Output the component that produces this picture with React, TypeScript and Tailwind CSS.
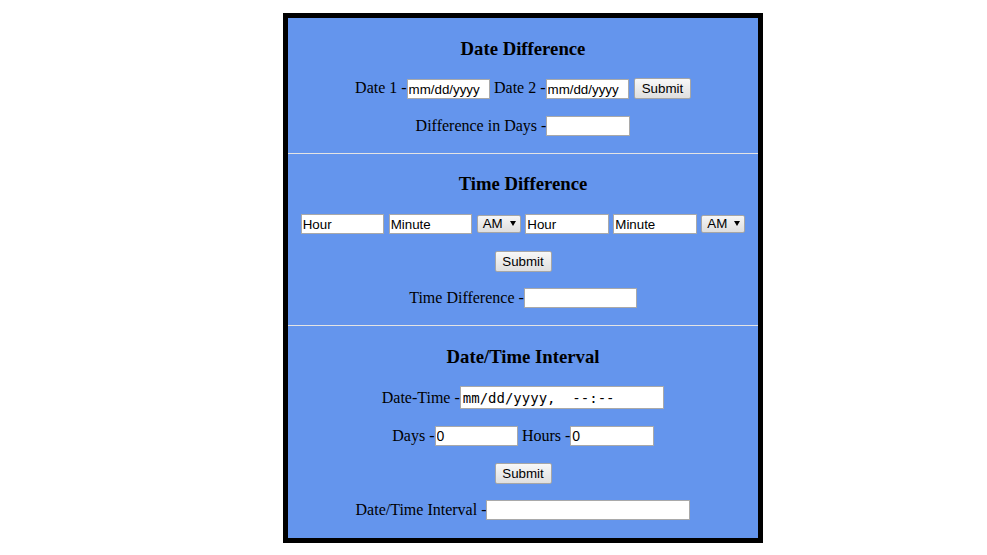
import type { ReactNode } from 'react'

const field =
  "h-[20px] border border-[#a9a9a9] bg-white px-[1px] font-['Liberation_Sans',Arial,sans-serif] text-[13.33px] text-black outline-none"
const mono = "font-['DejaVu_Sans_Mono',monospace]"
const btn =
  "h-[21px] w-[57px] rounded-[2px] border border-[#a6a6a6] bg-gradient-to-b from-[#f8f8f8] to-[#dfdfdf] font-['Liberation_Sans',Arial,sans-serif] text-[13.33px] text-black"

function Row({ children, className = '' }: { children: ReactNode; className?: string }) {
  return <div className={`flex items-end justify-center ${className}`}>{children}</div>
}

function Label({ children, className = '' }: { children: ReactNode; className?: string }) {
  return <span className={`whitespace-pre leading-[20px] ${className}`}>{children}</span>
}

// drop-down drawn as a button so the text sits the same in every browser
function AmPm({ className = '' }: { className?: string }) {
  return (
    <button
      type="button"
      role="combobox"
      className={`mb-[1px] flex h-[18px] w-[44px] items-center justify-between rounded-[2px] border border-[#a6a6a6] bg-gradient-to-b from-[#f6f6f6] to-[#dedede] pl-[5px] pr-[4px] font-['Liberation_Sans',Arial,sans-serif] text-[13.33px] leading-[16px] text-black ${className}`}
    >
      <span>AM</span>
      <svg className="-mt-[2px]" width="6" height="5" viewBox="0 0 6 5">
        <polygon points="0,0 6,0 3,5" fill="#000" />
      </svg>
    </button>
  )
}

function Divider() {
  return <div className="mt-[17px] h-px bg-[#e4e4e4]" />
}

export default function App() {
  return (
    <div className="min-h-screen bg-white pt-[13px]">
      <div className="ml-[283px] w-[480px] border-[5px] border-black bg-[#6495ED] pb-[18px] text-center font-['Liberation_Serif','Times_New_Roman',serif] text-[16px] text-black">
        {/* date difference */}
        <h3 className="mt-[20px] h-[21px] text-[18.72px] font-bold leading-[21px]">Date Difference</h3>
        <Row className="mt-[19px] h-[21px]">
          <Label className="mb-[1px]">Date 1 -</Label>
          <input className={`${field} w-[83.4px]`} defaultValue="mm/dd/yyyy" />
          <Label className="mb-[1px] ml-[4px]">Date 2 -</Label>
          <input className={`${field} w-[83.4px]`} defaultValue="mm/dd/yyyy" />
          <button className={`${btn} ml-[5px]`}>Submit</button>
        </Row>
        <Row className="mt-[16px] h-[21px]">
          <Label>Difference in Days -</Label>
          <input className={`${field} w-[84px]`} />
        </Row>
        <Divider />

        {/* time difference */}
        <h3 className="mt-[19px] h-[21px] text-[18.72px] font-bold leading-[21px]">Time Difference</h3>
        <Row className="mt-[19px] h-[21px]">
          <input className={`${field} w-[83.4px]`} defaultValue="Hour" />
          <input className={`${field} ml-[4.6px] w-[83.4px]`} defaultValue="Minute" />
          <AmPm className="ml-[4.6px]" />
          <input className={`${field} ml-[4.6px] w-[83.4px]`} defaultValue="Hour" />
          <input className={`${field} ml-[4.6px] w-[83.4px]`} defaultValue="Minute" />
          <AmPm className="ml-[4.6px]" />
        </Row>
        <Row className="mt-[17px] h-[21px]">
          <button className={btn}>Submit</button>
        </Row>
        <Row className="mt-[15px] h-[21px]">
          <Label>Time Difference -</Label>
          <input className={`${field} w-[113px]`} />
        </Row>
        <Divider />

        {/* date/time interval */}
        <h3 className="mt-[20px] h-[21px] text-[18.72px] font-bold leading-[21px]">Date/Time Interval</h3>
        <Row className="mt-[19px] h-[23px]">
          <Label className="mb-[1px]">Date-Time -</Label>
          <input
            className={`h-[23px] w-[204.5px] border border-[#a9a9a9] bg-white pl-[2px] ${mono} text-[14px] text-black outline-none`}
            defaultValue="mm/dd/yyyy,  --:--"
          />
        </Row>
        <Row className="mt-[16px] h-[21px]">
          <Label>Days -</Label>
          <input className={`${field} ${mono} w-[83.4px] !text-[14px]`} defaultValue="0" />
          <Label className="ml-[4px]">Hours -</Label>
          <input className={`${field} ${mono} w-[83.4px] !text-[14px]`} defaultValue="0" />
        </Row>
        <Row className="mt-[17px] h-[21px]">
          <button className={btn}>Submit</button>
        </Row>
        <Row className="mt-[15px] h-[21px]">
          <Label>Date/Time Interval -</Label>
          <input className={`${field} w-[204px]`} />
        </Row>
      </div>
    </div>
  )
}
